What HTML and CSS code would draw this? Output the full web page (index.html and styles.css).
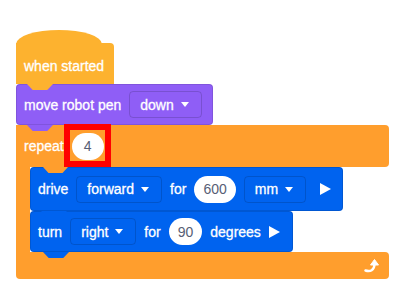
FILE: index.html
```html
<!DOCTYPE html>
<html lang="en">
<head>
    <meta charset="UTF-8">
    <title>Blocks</title>
    <link rel="stylesheet" href="styles.css">
</head>
<body>
    <div class="script">
        <div class="block hat">
            <span>when started</span>
        </div>

        <div class="block pen">
            <span>move robot pen</span>
            <span class="dropdown">down<i class="caret"></i></span>
        </div>

        <div class="repeat">
            <div class="block repeat-top">
                <span>repeat</span>
                <span class="oval highlight">4</span>
            </div>
            <div class="repeat-body">
                <div class="repeat-wall"></div>
                <div class="repeat-inner">
                    <div class="block motion drive">
                        <span>drive</span>
                        <span class="dropdown">forward<i class="caret"></i></span>
                        <span>for</span>
                        <span class="oval">600</span>
                        <span class="dropdown">mm<i class="caret"></i></span>
                        <svg class="play play-wide" width="11" height="12" viewBox="0 0 11 12"><path d="M0 0 L11 6 L0 12 Z" fill="#fff"/></svg>
                    </div>
                    <div class="block motion turn">
                        <span>turn</span>
                        <span class="dropdown">right<i class="caret"></i></span>
                        <span>for</span>
                        <span class="oval">90</span>
                        <span>degrees</span>
                        <svg class="play" width="11" height="12" viewBox="0 0 11 12"><path d="M0 0 L11 6 L0 12 Z" fill="#fff"/></svg>
                    </div>
                </div>
            </div>
            <div class="block repeat-bottom">
                <svg width="16" height="15" viewBox="0 0 16 15">
                    <path d="M1.5 12.5 C6 14 10.5 12.5 10.5 6" fill="none" stroke="#fff" stroke-width="2.4" stroke-linecap="round"/>
                    <path d="M6.5 7 L10.5 1.5 L14.5 7 Z" fill="#fff" stroke="#fff" stroke-width="1" stroke-linejoin="round"/>
                </svg>
            </div>
        </div>
    </div>
</body>
</html>
```

FILE: styles.css
```css
body {
    margin: 0;
    background: #FFFFFF;
    font-family: "Liberation Sans", Arial, sans-serif;
    font-size: 14px;
    color: white;
}
.script {
    padding: 43px 0 0 16px;
    display: flex;
    flex-direction: column;
    align-items: flex-start;
}
.block {
    position: relative;
    display: flex;
    align-items: center;
    gap: 8px;
    box-sizing: border-box;
    padding: 0 12px 0 8px;
    border-radius: 4px;
    white-space: nowrap;
    -webkit-text-stroke: 0.3px white;
}
/* tab that sticks into the block below */
.block::after {
    content: "";
    position: absolute;
    left: 11px;
    bottom: -6px;
    width: 26px;
    height: 6px;
    background: inherit;
    clip-path: polygon(0 0, 100% 0, 78% 100%, 22% 100%);
    z-index: 2;
}
.hat {
    height: 41px;
    padding-top: 4px;
    padding-right: 10px;
    background: #FDB22F;
    border-radius: 0 4px 0 0;
}
.hat::before {
    content: "";
    position: absolute;
    left: 0;
    top: -13px;
    width: 86px;
    height: 14px;
    background: #FDB22F;
    border-radius: 50% 50% 0 0 / 100% 100% 0 0;
}
.pen {
    height: 41px;
    padding-right: 11px;
    background: #8F5EF6;
    box-shadow: inset 0 0 0 1px rgba(0, 0, 0, 0.1);
}
.repeat {
    width: 373px;
    display: flex;
    flex-direction: column;
}
.repeat-top {
    height: 42px;
    background: #FF9E2D;
    border-radius: 0 4px 4px 0;
}
.repeat-top::after {
    left: 27px;
    width: 25px;
}
.repeat-body {
    display: flex;
}
.repeat-wall {
    width: 14px;
    background: #FF9E2D;
}
.repeat-inner {
    display: flex;
    flex-direction: column;
    align-items: flex-start;
}
.repeat-bottom {
    height: 27px;
    background: #FF9E2D;
    border-radius: 0 4px 4px 4px;
    justify-content: flex-end;
    padding-right: 9px;
}
.repeat-bottom::after {
    left: 12px;
    bottom: -8px;
    height: 8px;
}
.motion {
    background: #0063EF;
    box-shadow: inset 0 0 0 1px rgba(0, 0, 0, 0.12);
}
.drive {
    height: 44px;
}
.turn {
    height: 41px;
    padding-right: 13px;
}
.turn::after {
    left: 13px;
}
.dropdown {
    display: inline-flex;
    align-items: center;
    gap: 7px;
    height: 27px;
    box-sizing: border-box;
    padding: 0 12px 0 10px;
    border: 1px solid rgba(0, 0, 0, 0.15);
    border-radius: 4px;
}
.caret {
    width: 0;
    height: 0;
    border-left: 4px solid transparent;
    border-right: 4px solid transparent;
    border-top: 5px solid white;
}
.oval {
    position: relative;
    display: inline-flex;
    align-items: center;
    justify-content: center;
    height: 27px;
    min-width: 32px;
    box-sizing: border-box;
    padding: 0 9px;
    background: white;
    border-radius: 14px;
    color: #575E75;
    -webkit-text-stroke: 0;
}
.highlight::after {
    content: "";
    position: absolute;
    top: -9px;
    right: -7px;
    bottom: -7px;
    left: -8px;
    border: 6px solid #FF0000;
}
.play-wide {
    margin-left: 6px;
}
```
